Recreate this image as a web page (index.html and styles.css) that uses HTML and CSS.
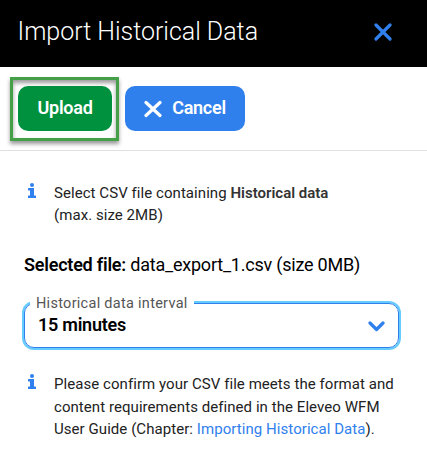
FILE: index.html
```html
<!DOCTYPE html>
<html lang="en">
<head>
<meta charset="utf-8">
<title>Import Historical Data</title>
<link rel="stylesheet" href="styles.css">
</head>
<body>
<header class="header">
  <h1 class="title">Import Historical Data</h1>
  <svg class="close" width="18" height="18" viewBox="0 0 18 18"><path d="M2 2 16 16M16 2 2 16"/></svg>
</header>
<div class="toolbar">
  <div class="highlight"><button class="btn upload">Upload</button></div>
  <button class="btn cancel"><svg width="18" height="18" viewBox="0 0 18 18"><path d="M2 2.500 16 15.500M16 2.500 2 15.500"/></svg><span>Cancel</span></button>
</div>
<main class="content">
  <div class="info">
    <svg class="info-icon" width="8" height="15" viewBox="0 0 8 15"><circle cx="4" cy="2" r="2"/><path d="M.5 5H6v7.500h1.500a.5.5 0 0 1 .5.5V14.500a.5.5 0 0 1-.5.5h-7a.5.5 0 0 1-.5-.5V13a.5.5 0 0 1 .5-.5H2V7.500H.5A.5.5 0 0 1 0 7V5.500A.5.5 0 0 1 .5 5z"/></svg>
    <p>Select CSV file containing <b>Historical data</b><br>(max. size 2MB)</p>
  </div>
  <p class="selected"><b>Selected file:</b> <span>data_export_1.csv (size 0MB)</span></p>
  <div class="select">
    <span class="label">Historical data interval</span>
    <span class="value">15 minutes</span>
    <svg class="chevron" width="17" height="11" viewBox="0 0 17 11"><path d="M2 2 8.500 8.500 15 2"/></svg>
  </div>
  <div class="info confirm">
    <svg class="info-icon" width="8" height="15" viewBox="0 0 8 15"><circle cx="4" cy="2" r="2"/><path d="M.5 5H6v7.500h1.500a.5.5 0 0 1 .5.5V14.500a.5.5 0 0 1-.5.5h-7a.5.5 0 0 1-.5-.5V13a.5.5 0 0 1 .5-.5H2V7.500H.5A.5.5 0 0 1 0 7V5.500A.5.5 0 0 1 .5 5z"/></svg>
    <p>Please confirm your CSV file meets the format and<br>content requirements defined in the Eleveo WFM<br>User Guide (Chapter: <a>Importing Historical Data</a>).</p>
  </div>
</main>
</body>
</html>
```
FILE: styles.css
```css
* { box-sizing: border-box; }
body { margin: 0; background: #fff; font-family: Roboto, "Liberation Sans", sans-serif; color: #000; }
p, h1 { margin: 0; white-space: nowrap; }
svg { flex: none; display: block; }
.header { height: 67px; background: #000; display: flex; align-items: center; justify-content: space-between; padding: 0 35px 3px 17.500px; }
.title { color: #fff; font-size: 25px; font-weight: 300; line-height: 30px; letter-spacing: -.02px; }
.close, .cancel svg { fill: none; stroke: #2f80ed; stroke-width: 3.2; stroke-linecap: round; }
.toolbar { height: 84px; border-bottom: 1px solid #e0e0e0; display: flex; align-items: flex-start; padding: 10px 0 0 10px; }
.highlight { width: 109px; height: 64px; border: 3px solid #43a047; padding: 6px 0 0 5px; box-shadow: 0 3px 4px rgba(0,0,0,.4), inset 0 3px 4px rgba(0,0,0,.4); }
.btn { display: flex; align-items: center; justify-content: center; height: 45px; border: 0; padding: 0 0 1px; border-radius: 10px; color: #fff; font: 600 18px/22px Roboto, sans-serif; letter-spacing: -.25px; }
.upload { width: 94px; background: #00913f; }
.cancel { width: 120px; margin: 9px 0 0 6px; background: #2f80ed; gap: 10px; }
.cancel svg { stroke: #fff; margin-top: 1px; }
.content { padding: 31px 28px 0 24px; }
.info { display: flex; gap: 18px; padding-left: 4px; color: #222; font-size: 15px; font-weight: 400; line-height: 22px; letter-spacing: .06px; }
.info b { font-weight: 600; color: #333; letter-spacing: 0; }
.info-icon { fill: #2f80ed; margin-top: 1px; }
.selected { margin-top: 27px; font-size: 18px; line-height: 24px; letter-spacing: -.22px; }
.selected b { font-weight: 600; }
.select { position: relative; height: 45px; margin-top: 26px; border: 1px solid #2f80ed; border-radius: 10px; box-shadow: 0 0 0 2px #66ccff; display: flex; align-items: center; justify-content: space-between; padding: 0 13px; }
.label { position: absolute; top: -10px; left: 5px; padding: 0 6px; background: #fff; color: #555; font-size: 14.500px; font-weight: 400; line-height: 20px; letter-spacing: .28px; white-space: nowrap; }
.value { margin-top: -2px; font-size: 18px; font-weight: 600; letter-spacing: -.25px; }
.chevron { margin-top: 1px; fill: none; stroke: #2f80ed; stroke-width: 3.2; stroke-linecap: round; stroke-linejoin: round; }
.confirm { margin-top: 25px; line-height: 22.500px; }
.info a { color: #2f80ed; }
```
